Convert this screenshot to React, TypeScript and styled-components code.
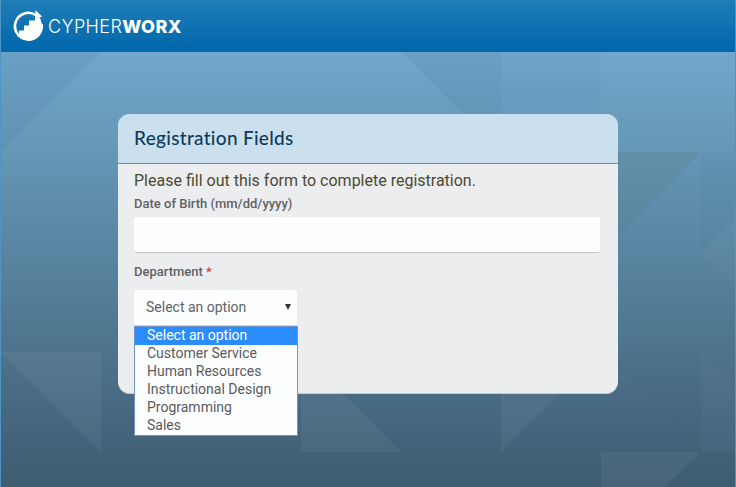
import React from 'react';
import styled, { createGlobalStyle } from 'styled-components';

const GlobalStyle = createGlobalStyle`
  html, body {
    margin: 0;
    padding: 0;
    height: 100%;
    overflow: hidden;
  }

  * {
    box-sizing: border-box;
  }

  body {
    font-family: Roboto, "Liberation Sans", sans-serif;
  }
`;

const Page = styled.div`
  position: relative;
  width: 736px;
  height: 487px;
  overflow: hidden;
  border-left: 1px solid #4f94c2;
  border-right: 1px solid #4f94c2;
  background: linear-gradient(180deg, #71a8cb 52px, #3e5b70 487px);
`;

const Pattern = styled.svg`
  position: absolute;
  left: -1px;
  top: 0;
  width: 736px;
  height: 487px;
`;

const Header = styled.header`
  position: relative;
  height: 52px;
  padding: 9px 0 0 11px;
  display: flex;
  align-items: flex-start;
  gap: 3px;
  background: linear-gradient(180deg, #1f7db7 0%, #0067ab 100%);
`;

const Wordmark = styled.div`
  margin-top: 8px;
  font-family: Inter, sans-serif;
  font-size: 18px;
  line-height: 20px;
  letter-spacing: 0.4px;
  font-weight: 300;
  color: #fff;

  b {
    font-weight: 800;
  }
`;

const Card = styled.main`
  position: relative;
  width: 500px;
  height: 280px;
  margin: 62px 0 0 117px;
  border-radius: 12px;
  background: #ecedef;
  border-bottom: 1px solid #c9c9c9;
`;

const CardHead = styled.div`
  height: 50px;
  padding: 12px 16px 0;
  border-radius: 12px 12px 0 0;
  background: #cbe0ee;
  border-bottom: 1px solid #4f94c2;
`;

const Title = styled.h1`
  margin: 0;
  font-family: Lato, sans-serif;
  font-size: 19px;
  line-height: 24px;
  font-weight: 500;
  letter-spacing: 0.3px;
  color: #0f3a5c;
`;

const CardBody = styled.div`
  padding: 8px 16px 0;
`;

const Intro = styled.p`
  margin: 0;
  font-size: 16px;
  line-height: 18px;
  color: #4b4a30;
`;

const Label = styled.label`
  display: block;
  margin-top: 6px;
  font-size: 13px;
  line-height: 15px;
  font-weight: 500;
  color: #616265;

  em {
    font-style: normal;
    color: #e8373f;
  }
`;

const TextField = styled.input`
  display: block;
  width: 466px;
  height: 36px;
  margin: 6px 0 0;
  border: 0;
  border-bottom: 1px solid #c4c5c7;
  border-radius: 3px;
  background: #fdfeff;
`;

const DepartmentLabel = styled(Label)`
  margin-top: 11px;
`;

const SelectBox = styled.div`
  width: 163px;
  height: 36px;
  margin-top: 11px;
  padding: 0 6px 2px 12px;
  display: flex;
  align-items: center;
  justify-content: space-between;
  border-bottom: 1px solid #d3d4d6;
  border-radius: 3px;
  background: #fdfeff;
  font-size: 14px;
  color: #616265;
`;

const Caret = styled.span`
  width: 0;
  height: 0;
  border-left: 3px solid transparent;
  border-right: 3px solid transparent;
  border-top: 6px solid #333;
`;

const Options = styled.ul`
  position: absolute;
  left: 16px;
  top: 212px;
  width: 164px;
  margin: 0;
  padding: 0;
  list-style: none;
  border: 1px solid #6f93c6;
  background: #fdfeff;
`;

const Option = styled.li<{ $active?: boolean }>`
  height: 18px;
  padding-left: 12px;
  font-size: 14px;
  line-height: 16px;
  color: ${p => (p.$active ? '#fff' : '#5a5a5c')};
  background: ${p => (p.$active ? '#2b8dfd' : 'transparent')};
`;

const departments = ['Select an option', 'Customer Service', 'Human Resources', 'Instructional Design', 'Programming', 'Sales'];

const Logo = () => (
  <svg width="33" height="33" viewBox="0 0 33 33">
    <path d="M24 6.2A13.4 13.4 0 1 0 29.6 15" fill="none" stroke="#fff" strokeWidth="2.6" />
    <path d="M23.500 1l6.500 6.500-7 2.800z" fill="#fff" />
    <path d="M7 26.500v-5h5v-5h5v-5h6v-1.500l5-1.500 2 7c1 9-6 16-14 15.500-3-.3-6-2-9-4.500z" fill="#fff" />
  </svg>
);

const shade = [
  { d: 'M0 52H100L0 152Z', c: '#3d6f92', o: 0.12 },
  { d: 'M400 52H500V152Z', c: '#3d6f92', o: 0.14 },
  { d: 'M500 52V352H600V52Z', c: '#3d6f92', o: 0.03 },
  { d: 'M600 152H700L600 252Z', c: '#55767a', o: 0.18 },
  { d: 'M700 152H736V217L700 252Z', c: '#3d6f92', o: 0.07 },
  { d: 'M700 252L736 287V217Z', c: '#8aa7bd', o: 0.07 },
  { d: 'M600 352H700V452Z', c: '#3d5f7c', o: 0.06 },
  { d: 'M700 352L736 388V452H700Z', c: '#8aa0b0', o: 0.07 }
];

const light = [
  'M0 352H100V452Z',
  'M300 352L400 452H300Z',
  'M500 352H600L500 452Z',
  'M600 452H700L665 487H600Z'
];

const App = () => (
  <>
    <GlobalStyle />
    <Page>
      <Pattern viewBox="-1 0 736 487">
        {shade.map(s => (
          <path d={s.d} fill={s.c} fillOpacity={s.o} key={s.d} />
        ))}
        {light.map(d => (
          <path d={d} fill="#fff" fillOpacity={0.05} key={d} />
        ))}
      </Pattern>
      <Header>
        <Logo />
        <Wordmark>CYPHER<b>WORX</b></Wordmark>
      </Header>
      <Card>
        <CardHead>
          <Title>Registration Fields</Title>
        </CardHead>
        <CardBody>
          <Intro>Please fill out this form to complete registration.</Intro>
          <Label>Date of Birth (mm/dd/yyyy)</Label>
          <TextField />
          <DepartmentLabel>Department <em>*</em></DepartmentLabel>
          <SelectBox>
            Select an option
            <Caret />
          </SelectBox>
        </CardBody>
        <Options>
          {departments.map((name, i) => (
            <Option $active={i === 0} key={name}>{name}</Option>
          ))}
        </Options>
      </Card>
    </Page>
  </>
);

export default App;
